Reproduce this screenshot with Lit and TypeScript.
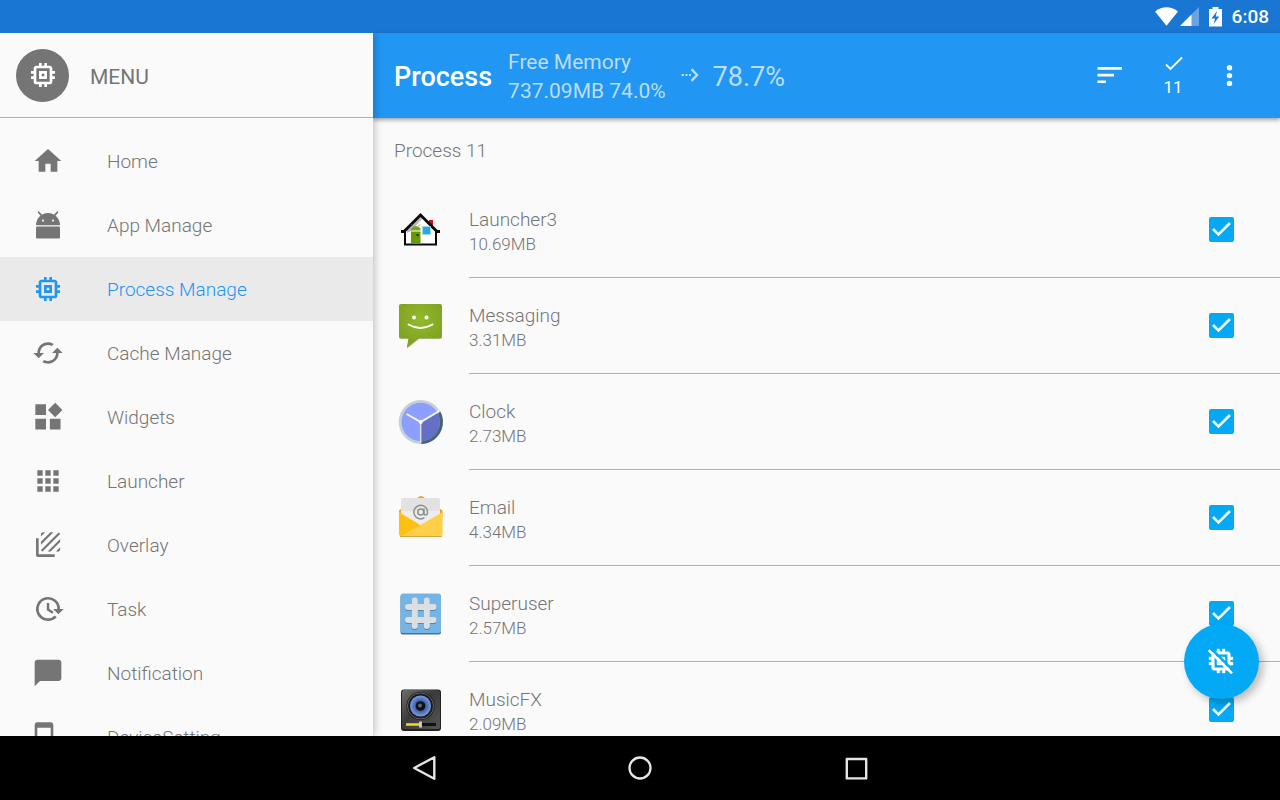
import { LitElement, html, svg, css } from "lit";
import { customElement, state } from "lit/decorators.js";
import { classMap } from "lit/directives/class-map.js";

const MEMORY =
  "M15 9H9v6h6V9zm-2 4h-2v-2h2v2zm8-2V9h-2V7c0-1.1-.9-2-2-2h-2V3h-2v2h-2V3H9v2H7c-1.1 0-2 .9-2 2v2H3v2h2v2H3v2h2v2c0 1.1.9 2 2 2h2v2h2v-2h2v2h2v-2h2c1.1 0 2-.9 2-2v-2h2v-2h-2v-2h2zm-4 6H7V7h10v10z";

const menuIcons = {
  home: svg`<path d="M10 20v-6h4v6h5v-8h3L12 3 2 12h3v8z"/>`,
  android: svg`
    <path d="M3 12.2a9 9.2 0 0 1 18 0z"/>
    <path d="M5 2.4l2 2.4M19 2.4l-2 2.4" stroke="currentColor" stroke-width="1.3" stroke-linecap="round"/>
    <rect x="3" y="13.2" width="18" height="9" rx="1"/>
    <circle cx="8.3" cy="8.7" r=".8" fill="#fafafa"/>
    <circle cx="15.7" cy="8.7" r=".8" fill="#fafafa"/>`,
  memory: svg`<path d=${MEMORY}/>`,
  cached: svg`<path d="M19 8l-4 4h3c0 3.31-2.69 6-6 6-1.01 0-1.97-.25-2.8-.7l-1.46 1.46C8.97 19.54 10.43 20 12 20c4.42 0 8-3.58 8-8h3l-4-4zM6 12c0-3.31 2.69-6 6-6 1.01 0 1.97.25 2.8.7l1.46-1.46C15.03 4.46 13.57 4 12 4c-4.42 0-8 3.58-8 8H1l4 4 4-4H6z"/>`,
  widgets: svg`<path d="M2.5 2.5h8v8h-8zM2.5 13.4h8v8h-8zM13.4 13.4h8v8h-8zM17.4 1.3l5.4 5.4-5.4 5.4L12 6.7z"/>`,
  apps: svg`<path d="M4 8h4V4H4v4zm6 12h4v-4h-4v4zm-6 0h4v-4H4v4zm0-6h4v-4H4v4zm6 0h4v-4h-4v4zm6-10v4h4V4h-4zm-6 4h4V4h-4v4zm6 6h4v-4h-4v4zm0 6h4v-4h-4v4z"/>`,
  overlay: svg`
    <path d="M3 7h2v12h12v2H4.5A1.5 1.5 0 0 1 3 19.500z"/>
    <path transform="translate(4.300 .1) scale(.8)" d="M19.510 3.080L3.080 19.510c.09.34.27.65.51.9.25.24.56.42.9.51L20.930 4.490c-.19-.69-.73-1.230-1.420-1.410zM11.880 3L3 11.880v2.830L14.710 3h-2.830zM5 3c-1.100 0-2 .9-2 2v2l4-4H5zm14 18c.55 0 1.050-.22 1.410-.59.37-.36.59-.86.59-1.410v-2l-4 4h2zm-9.710 0h2.830L21 12.120V9.290L9.290 21z"/>`,
  task: svg`
    <path d="M20 12.500A8 8 0 1 0 17.800 17.500" fill="none" stroke="currentColor" stroke-width="2"/>
    <path d="M15.800 12h8l-4 4z"/>
    <path d="M12 7.500v4.900l3.700 2.500" fill="none" stroke="currentColor" stroke-width="1.800"/>`,
  chat: svg`<path d="M20 2H4c-1.100 0-2 .9-2 2v18l4-4h14c1.100 0 2-.9 2-2V4c0-1.100-.9-2-2-2z"/>`,
  device: svg`<path fill-rule="evenodd" d="M4 1h10c1.100 0 2 .9 2 2v18c0 1.100-.9 2-2 2H4c-1.100 0-2-.9-2-2V3c0-1.100.9-2 2-2zM4 5v14h10V5z"/>`,
};

const appIcons = {
  launcher: svg`
    <path d="M32 14h4v11h-4z" fill="#d40d0d"/>
    <path d="M23.500 8L8 25v14h31V25z" fill="#fff"/>
    <path d="M23.500 10L10 24v3l4-2 11-12z" fill="#b9b9b9"/>
    <path d="M8 24v14.500h31V24" fill="none" stroke="#0a0a0a" stroke-width="2"/>
    <path d="M4 25.500h3L23.500 9 40 25.500h3" fill="none" stroke="#0a0a0a" stroke-width="2.800"/>
    <path d="M14 22.500q5-5 9.500 0v2H14z" fill="#77a80b"/>
    <path d="M14 25.500h9.500V38H14z" fill="#689a00"/>
    <path d="M14.500 18.500l2 2M23 18.500l-2 2" stroke="#77a80b"/>
    <path d="M19.500 28h2v2h-2z" fill="#183000"/>
    <path d="M25.500 20.500h8v8h-8z" fill="#2fa7dd"/>
    <path d="M25.500 20.500h8v8h-8z" fill="none" stroke="#9bd9f5" stroke-width=".8"/>`,
  messaging: svg`
    <defs><radialGradient id="msg" cx=".5" cy=".35" r=".7">
      <stop offset="0" stop-color="#94b92b"/><stop offset="1" stop-color="#7b9f20"/>
    </radialGradient></defs>
    <path d="M4 3h39q2 0 2 2v30q0 2-2 2H22L10 46.500 11.500 37H4q-2 0-2-2V5q0-2 2-2z" fill="#5f7e14" opacity=".55"/>
    <path d="M4 2h39q2 0 2 2v30q0 2-2 2H22L10 45.500 11.500 36H4q-2 0-2-2V4q0-2 2-2z" fill="url(#msg)"/>
    <circle cx="17" cy="15.500" r="2" fill="#fff"/><circle cx="29.500" cy="15.500" r="2" fill="#fff"/>
    <path d="M11.500 22.500Q23.500 29.500 35.500 22.500" fill="none" stroke="#fff" stroke-width="1.900" stroke-linecap="round"/>`,
  clock: svg`
    <circle cx="23.700" cy="24" r="22" fill="#c3d1d6"/>
    <path d="M43 13a22 22 0 0 1-19 33l1-4z" fill="#4b636e"/>
    <circle cx="23.700" cy="24" r="19.200" fill="#8c9eff"/>
    <path d="M23.700 24l16.700-9.500A19.200 19.200 0 0 1 23.700 43.200z" fill="#6370c4"/>
    <path d="M23.700 24v20.500" stroke="#e4e8ea" stroke-width="1.300"/>
    <path d="M9.700 16l14 8 18.500-11" fill="none" stroke="#f4f6f7" stroke-width="2"/>
    <circle cx="23.700" cy="24" r="1.900" fill="#fff"/>`,
  email: svg`
    <path d="M19.500 4.500q4.500-5 9 0l17 12v8H2v-8z" fill="#f89e1c"/>
    <path d="M6 4h35q2 0 2 2v26H4V6q0-2 2-2z" fill="#e2e2e2"/>
    <path d="M4 17h39v10L24 33 4 27z" fill="#ededed"/>
    <circle cx="23.800" cy="18" r="3" fill="none" stroke="#8f8f8f" stroke-width="1.600"/>
    <path d="M26.900 14.500v4.500q0 2 1.800 2t1.800-3a6.800 6.800 0 1 0-3 5.700" fill="none" stroke="#8f8f8f" stroke-width="1.500"/>
    <path d="M2 18l22 13.500L4.500 42.500Q2 42 2 40z" fill="#ffc012"/>
    <path d="M45.600 18L4 42.500h39q2.600 0 2.600-2.500V18z" fill="#ffcf4a"/>
    <path d="M3 42.500h42" stroke="#d9a73e"/>`,
  superuser: svg`
    <rect x="3.500" y="4.500" width="40.500" height="40" rx="2.500" fill="#4a6f8f"/>
    <rect x="3.500" y="3.500" width="40.500" height="39.500" rx="2.500" fill="#74b5e6"/>
    <path d="M17.800 11v26M29.800 11v26M11 18h25.500M11 31h25.500" stroke="#5487ad" stroke-width="6.200" stroke-linecap="round"/>
    <path d="M17.800 10.500v25.500M29.800 10.500v25.500M11 17h25.500M11 30h25.500" stroke="#dcdfe2" stroke-width="6" stroke-linecap="round"/>`,
  music: svg`
    <defs>
      <linearGradient id="mfx" x1="0" y1="0" x2="1" y2="1">
        <stop offset="0" stop-color="#6d6d6d"/><stop offset=".45" stop-color="#3a3a3a"/><stop offset="1" stop-color="#555"/>
      </linearGradient>
      <radialGradient id="cone"><stop offset="0" stop-color="#1f3159"/><stop offset=".6" stop-color="#4a6cb8"/><stop offset="1" stop-color="#7d9ae0"/></radialGradient>
    </defs>
    <rect x="4" y="3.500" width="40" height="41.500" rx="3" fill="#222"/>
    <rect x="5" y="4" width="38" height="39" rx="2.500" fill="url(#mfx)"/>
    <circle cx="23.500" cy="20" r="14" fill="#1b1b1b"/>
    <circle cx="23.500" cy="20" r="13" fill="none" stroke="#666" stroke-width="1"/>
    <circle cx="23.500" cy="20" r="10.500" fill="url(#cone)"/>
    <circle cx="23.500" cy="20" r="4.800" fill="#111"/>
    <circle cx="23" cy="19.500" r="2" fill="#5e6670"/>
    <path d="M9 38.500h30" stroke="#111" stroke-width="3"/>
    <path d="M9 38.500h13" stroke="#f2dc2b" stroke-width="2.600"/>
    <rect x="22" y="35.500" width="3" height="6" fill="#c9c9c9"/>`,
};

interface MenuEntry {
  label: string;
  icon: keyof typeof menuIcons;
}

interface ProcessEntry {
  name: string;
  size: string;
  icon: keyof typeof appIcons;
  checked: boolean;
}

const MENU: MenuEntry[] = [
  { label: "Home", icon: "home" },
  { label: "App Manage", icon: "android" },
  { label: "Process Manage", icon: "memory" },
  { label: "Cache Manage", icon: "cached" },
  { label: "Widgets", icon: "widgets" },
  { label: "Launcher", icon: "apps" },
  { label: "Overlay", icon: "overlay" },
  { label: "Task", icon: "task" },
  { label: "Notification", icon: "chat" },
  { label: "DeviceSetting", icon: "device" },
];

@customElement("app-root")
export class AppRoot extends LitElement {
  @state() private active = "Process Manage";

  @state() private processes: ProcessEntry[] = [
    { name: "Launcher3", size: "10.69MB", icon: "launcher", checked: true },
    { name: "Messaging", size: "3.31MB", icon: "messaging", checked: true },
    { name: "Clock", size: "2.73MB", icon: "clock", checked: true },
    { name: "Email", size: "4.34MB", icon: "email", checked: true },
    { name: "Superuser", size: "2.57MB", icon: "superuser", checked: true },
    { name: "MusicFX", size: "2.09MB", icon: "music", checked: true },
  ];

  static styles = css`
    :host {
      display: flex;
      flex-direction: column;
      height: 100vh;
      overflow: hidden;
      background: #fafafa;
      color: #757575;
      font-family: Roboto, "Noto Sans", sans-serif;
      font-weight: 300;
    }
    * {
      box-sizing: border-box;
    }
    button {
      border: 0;
      padding: 0;
      background: none;
      color: inherit;
      font: inherit;
      cursor: pointer;
    }
    svg {
      display: block;
      flex: none;
      fill: currentColor;
    }
    .status {
      flex: none;
      display: flex;
      align-items: center;
      justify-content: flex-end;
      height: 33px;
      padding-right: 11px;
      background: #1976d2;
      color: #fff;
      font-size: 19px;
      font-weight: 500;
    }
    .status-icons {
      margin-right: 8px;
    }
    .body {
      flex: 1;
      min-height: 0;
      display: grid;
      grid-template-columns: minmax(240px, 373px) 1fr;
    }
    .drawer {
      z-index: 2;
      display: flex;
      flex-direction: column;
      min-height: 0;
      background: #fafafa;
      box-shadow: 0 0 9px rgba(0, 0, 0, 0.32);
      clip-path: inset(0 -16px 0 0);
    }
    .drawer-head {
      flex: none;
      display: flex;
      align-items: center;
      gap: 21px;
      height: 85px;
      padding-left: 16px;
      border-bottom: 1px solid #b2b2b2;
      font-size: 21px;
      font-weight: 400;
    }
    .drawer-title {
      padding-top: 3px;
    }
    .avatar {
      display: grid;
      place-items: center;
      width: 53px;
      height: 53px;
      border-radius: 50%;
      background: #757575;
      color: #fff;
    }
    .menu {
      flex: 1;
      min-height: 0;
      overflow: hidden;
      margin: 0;
      padding: 11px 0 0;
      list-style: none;
    }
    .menu-link {
      display: flex;
      align-items: center;
      gap: 43px;
      height: 64px;
      padding-left: 32px;
      color: #757575;
      font-size: 19px;
      text-decoration: none;
    }
    .menu-link.active {
      background: #eaeaea;
      color: #2196f3;
    }
    .main {
      position: relative;
      display: flex;
      flex-direction: column;
      min-width: 0;
      min-height: 0;
    }
    .toolbar {
      z-index: 1;
      flex: none;
      display: flex;
      align-items: center;
      height: 85px;
      padding: 0 27px 0 21px;
      background: #2196f3;
      box-shadow: 0 2px 4px rgba(0, 0, 0, 0.36);
      color: #fff;
    }
    .readout {
      flex: 1;
      display: flex;
      align-items: center;
      padding-top: 2px;
      color: #bbdefb;
      font-weight: 400;
    }
    .title {
      margin: 0;
      color: #fff;
      font-size: 27px;
      font-weight: 500;
    }
    .memory {
      margin-left: 16px;
      font-size: 21px;
      line-height: 29px;
    }
    .arrow {
      margin: 0 14px 0 15px;
    }
    .target {
      font-size: 27px;
    }
    .action {
      display: grid;
      place-items: center;
      align-content: center;
      width: 64px;
      height: 64px;
      font-size: 17px;
      font-weight: 400;
      line-height: 23px;
    }
    .action.narrow {
      width: 48px;
    }
    .list-area {
      flex: 1;
      min-height: 0;
      overflow: hidden;
    }
    .section {
      margin: 0;
      padding: 2px 0 0 21px;
      font-size: 19px;
      font-weight: 300;
      line-height: 62px;
    }
    .list {
      margin: 0;
      padding: 0;
      list-style: none;
    }
    .row {
      display: flex;
      align-items: center;
      gap: 24px;
      height: 96px;
      padding-left: 24px;
      cursor: pointer;
    }
    .row-body {
      flex: 1;
      display: flex;
      align-items: center;
      justify-content: space-between;
      align-self: stretch;
      padding-right: 46px;
      border-bottom: 1px solid #b2b2b2;
    }
    .name {
      display: block;
      padding-top: 4px;
      font-size: 19px;
      line-height: 24px;
    }
    .size {
      display: block;
      font-size: 17px;
      line-height: 24px;
    }
    .check {
      display: grid;
      color: #fff;
    }
    .box {
      grid-area: 1 / 1;
      appearance: none;
      width: 25px;
      height: 25px;
      margin: 0;
      border: 2px solid #757575;
      border-radius: 2px;
    }
    .box:checked {
      border-color: #03a9f4;
      background: #03a9f4;
    }
    .tick {
      grid-area: 1 / 1;
      pointer-events: none;
    }
    .fab {
      position: absolute;
      right: 21px;
      bottom: 37px;
      z-index: 1;
      display: grid;
      place-items: center;
      width: 75px;
      height: 75px;
      border-radius: 50%;
      background: #03a9f4;
      box-shadow: 4px 4px 8px rgba(0, 0, 0, 0.26);
      color: #fff;
    }
    .navbar {
      z-index: 3;
      flex: none;
      display: flex;
      justify-content: center;
      gap: 152px;
      height: 64px;
      background: #000;
      color: #e6e6e6;
    }
    .nav-button {
      display: grid;
      place-items: center;
      width: 64px;
    }
  `;

  private toggle(index: number) {
    this.processes = this.processes.map((p, i) => (i === index ? { ...p, checked: !p.checked } : p));
  }

  private select(event: Event, label: string) {
    event.preventDefault();
    this.active = label;
  }

  private renderMenu() {
    return MENU.map(
      (m) => html`<li>
        <a
          href="#"
          class=${classMap({ "menu-link": true, active: m.label === this.active })}
          @click=${(e: Event) => this.select(e, m.label)}
        >
          <svg width="32" height="32" viewBox="0 0 24 24" aria-hidden="true">${menuIcons[m.icon]}</svg>
          <span>${m.label}</span>
        </a>
      </li>`
    );
  }

  private renderProcesses() {
    return this.processes.map(
      (p, i) => html`<li>
        <label class="row">
          <svg width="48" height="48" viewBox="0 0 48 48" fill="none" aria-hidden="true">${appIcons[p.icon]}</svg>
          <span class="row-body">
            <span>
              <span class="name">${p.name}</span>
              <span class="size">${p.size}</span>
            </span>
            <span class="check">
              <input class="box" type="checkbox" .checked=${p.checked} @change=${() => this.toggle(i)} />
              <svg class="tick" width="25" height="25" viewBox="0 0 25 25" aria-hidden="true">
                <path d="M4 12l5.500 5.500L21 6" fill="none" stroke="currentColor" stroke-width="2.600" />
              </svg>
            </span>
          </span>
        </label>
      </li>`
    );
  }

  render() {
    return html`
      <div class="status">
        <svg class="status-icons" width="69" height="20" viewBox="0 0 69 20" aria-hidden="true">
          <path d="M0 4.500Q11.500-3.800 23 4.500L11.500 18.700z" />
          <path d="M44 0v19H25z" opacity=".35" />
          <path d="M36.500 7.500V19H25z" />
          <path
            fill-rule="evenodd"
            d="M57.500 0h6v2H67v17.500H54V2h3.500zM62 4l-5.500 7.500h3.600L58.500 17l5.800-7.500h-3.600z"
          />
        </svg>
        <span>6:08</span>
      </div>
      <div class="body">
        <aside class="drawer">
          <div class="drawer-head">
            <span class="avatar">
              <svg width="32" height="32" viewBox="0 0 24 24" aria-hidden="true"><path d=${MEMORY} /></svg>
            </span>
            <span class="drawer-title">MENU</span>
          </div>
          <ul class="menu">
            ${this.renderMenu()}
          </ul>
        </aside>
        <main class="main">
          <header class="toolbar">
            <div class="readout">
              <h1 class="title">Process</h1>
              <div class="memory">
                <div>Free Memory</div>
                <div>737.09MB 74.0%</div>
              </div>
              <svg class="arrow" width="18" height="18" viewBox="0 0 18 18" aria-hidden="true">
                <path d="M.5 6H3v2H.5zM4.500 6h2v2h-2zM8 6h2v2H8z" />
                <path d="M10.500 1.200L16 7l-5.500 5.800" fill="none" stroke="currentColor" stroke-width="2.400" />
              </svg>
              <span class="target">78.7%</span>
            </div>
            <button class="action" aria-label="Sort">
              <svg width="28" height="20" viewBox="0 0 28 20">
                <path d="M2.500 1H27v2.700H2.500zM2.500 7.700H19v2.700H2.500zM2.500 14.400H11v2.700H2.500z" />
              </svg>
            </button>
            <button class="action" aria-label="Selected 11">
              <svg width="20" height="24" viewBox="0 0 20 24">
                <path d="M3 12.500l4.500 4.500L19 5.500" fill="none" stroke="currentColor" stroke-width="1.900" />
              </svg>
              <span>11</span>
            </button>
            <button class="action narrow" aria-label="More options">
              <svg width="8" height="24" viewBox="0 0 8 24">
                <circle cx="4.500" cy="3.800" r="2.700" /><circle cx="4.500" cy="11.600" r="2.700" /><circle cx="4.500" cy="19.400" r="2.700" />
              </svg>
            </button>
          </header>
          <div class="list-area">
            <h2 class="section">Process 11</h2>
            <ul class="list">
              ${this.renderProcesses()}
            </ul>
          </div>
          <button class="fab" aria-label="Stop processes">
            <svg width="33" height="33" viewBox="0 0 24.750 24.750">
              <path d=${MEMORY} stroke="currentColor" stroke-width=".3" />
              <path d="M4.500 2.500L22 20" stroke="#03a9f4" stroke-width="1.800" />
              <path d="M2.800 3.800l17.500 17.500" stroke="currentColor" stroke-width="1.900" />
            </svg>
          </button>
        </main>
      </div>
      <nav class="navbar">
        <button class="nav-button" aria-label="Back">
          <svg width="28" height="28" viewBox="0 0 28 28">
            <path d="M24.300 3.200v21.600L4.200 14z" fill="none" stroke="currentColor" stroke-width="2.400" stroke-linejoin="round" />
          </svg>
        </button>
        <button class="nav-button" aria-label="Home">
          <svg width="28" height="28" viewBox="0 0 28 28">
            <circle cx="14" cy="14" r="10.500" fill="none" stroke="currentColor" stroke-width="2.300" />
          </svg>
        </button>
        <button class="nav-button" aria-label="Recent apps">
          <svg width="28" height="28" viewBox="0 0 28 28">
            <rect x="4.800" y="5" width="19.400" height="19.400" fill="none" stroke="currentColor" stroke-width="2.400" stroke-linejoin="round" />
          </svg>
        </button>
      </nav>
    `;
  }
}
